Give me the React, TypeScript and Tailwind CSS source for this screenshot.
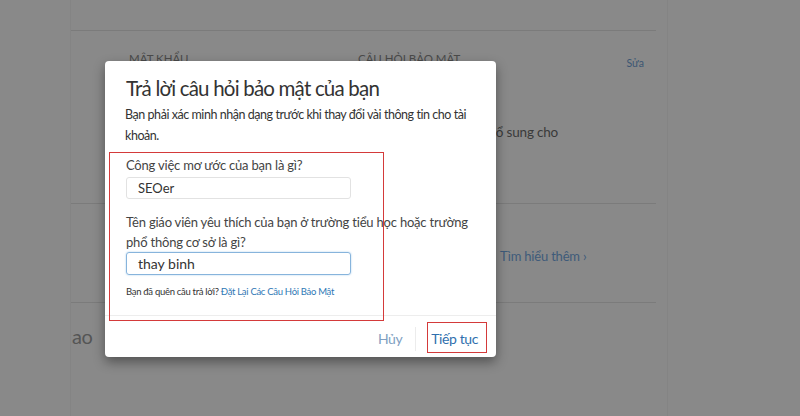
export default function App() {
  return (
    <div className="relative w-[800px] h-[416px] overflow-hidden bg-[#898989] font-['Lato','Noto_Sans',sans-serif] text-[#333]">
      {/* page behind the dim overlay */}
      <div className="ml-[70px] w-[598px] h-full border-x border-[#848484] pt-[30px]">
        <div className="mr-[11px] border-t border-[#7b7b7b]">
          {/* password / security questions */}
          <div className="h-[172px] pl-[58px] pr-[12px] pt-[19px] flex">
            <div className="w-[229px] text-[11.5px] text-[#4a4a4a]">MẬT KHẨU</div>
            <div className="flex-1 flex flex-col">
              <div className="flex justify-between items-start">
                <span className="text-[11.5px] text-[#4a4a4a]">CÂU HỎI BẢO MẬT</span>
                <span className="mt-[6px] text-[10.5px] text-[#3b5673]">Sửa</span>
              </div>
              <div className="mt-[50px] w-[200px] flex justify-end whitespace-nowrap text-[13.5px] tracking-[-0.2px] text-[#3a3a3a]">
                <span>bổ sung cho</span>
              </div>
            </div>
          </div>
          <div className="h-[99px] border-t border-[#7b7b7b] pl-[429px] pt-[43px] text-[13px] tracking-[-0.2px] text-[#3e5b7a]">
            Tìm hiểu thêm ›
          </div>
          <div className="h-[120px] border-t border-[#7b7b7b] pl-px pt-[18px] text-[20px] tracking-[-0.5px] text-[#555]">ao</div>
        </div>
      </div>

      {/* dialog */}
      <div className="absolute left-[105px] top-[61px] w-[391px] h-[296px] bg-white rounded-[4px] shadow-[0_5px_12px_rgba(0,0,0,0.4)] flex flex-col">
        <div className="flex-1 pl-[21px] pr-[15px] pt-[14px]">
          <h2 className="text-[20.5px] leading-[27px] tracking-[-0.8px] text-[#333]">Trả lời câu hỏi bảo mật của bạn</h2>
          <p className="mt-[2px] -ml-px text-[12.5px] leading-[21px] tracking-[-0.45px] text-[#333]">
            Bạn phải xác minh nhận dạng trước khi thay đổi vài thông tin cho tài khoản.
          </p>
          <div className="mt-[9px] text-[13px] leading-[20px] tracking-[-0.2px] text-[#444]">Công việc mơ ước của bạn là gì?</div>
          <div className="mt-[2px] w-[225px] h-[22px] border border-[#e2e2e2] rounded-[3px] pl-[11px] text-[13px] leading-[20px] text-[#333]">
            SEOer
          </div>
          <div className="mt-[13px] w-[350px] text-[13px] leading-[20px] tracking-[-0.2px] text-[#444]">
            Tên giáo viên yêu thích của bạn ở trường tiểu học hoặc trường phổ thông cơ sở là gì?
          </div>
          <div className="mt-0 w-[225px] h-[23px] border border-[#87b4dc] rounded-[3px] shadow-[0_0_2px_#a9cdeb] pl-[11px] text-[14px] leading-[21px] text-[#333]">
            thay binh
          </div>
          <div className="mt-[10px] text-[9.5px] leading-[14px] tracking-[-0.3px] text-[#333]">
            Bạn đã quên câu trả lời? <span className="text-[#2f78b5]">Đặt Lại Các Câu Hỏi Bảo Mật</span>
          </div>
        </div>
        <div className="h-[42px] border-t border-[#ededed] flex items-center justify-end pt-[4px] pr-[18px] text-[14px] tracking-[-0.4px]">
          <span className="text-[#7f9fc2]">Hủy</span>
          <span className="ml-[13px] mr-[15px] w-px h-[24px] bg-[#ececec]" />
          <span className="text-[#2f6fae]">Tiếp tục</span>
        </div>
      </div>

      {/* red annotation boxes */}
      <div className="absolute left-[109px] top-[152px] w-[275px] h-[169px] border-[1.5px] border-[#d43a3a]" />
      <div className="absolute left-[427px] top-[322px] w-[60px] h-[31px] border-[1.5px] border-[#d43a3a]" />
    </div>
  );
}
